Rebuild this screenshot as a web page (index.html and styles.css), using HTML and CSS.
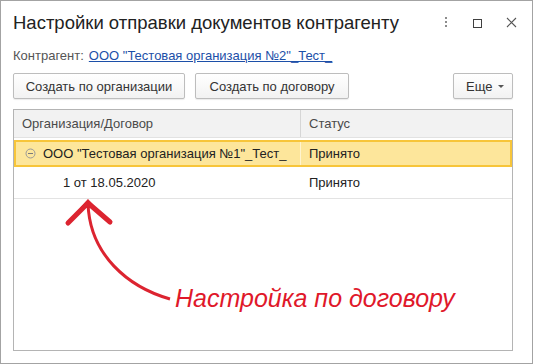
FILE: index.html
```
<html>
    <head>
        <title>Настройки отправки документов контрагенту</title>
        <meta charset="utf-8">
        <link rel="stylesheet" href="styles.css">
    </head>
    <body>
    <div class="window">
        <!-- title bar -->
        <div class="title-bar">
            <h1 class="title">Настройки отправки документов контрагенту</h1>
            <div class="title-icons">
                <svg class="icon-more" width="4" height="12" viewBox="0 0 4 12">
                    <rect x="1" y="0" width="2" height="2" fill="#8c8c8c"/>
                    <rect x="1" y="4" width="2" height="2" fill="#8c8c8c"/>
                    <rect x="1" y="8" width="2" height="2" fill="#8c8c8c"/>
                </svg>
                <svg class="icon-max" width="10" height="10" viewBox="0 0 10 10">
                    <rect x="1.5" y="1.5" width="8" height="8" fill="none" stroke="#404040" stroke-width="1"/>
                </svg>
                <svg class="icon-close" width="11" height="11" viewBox="0 0 11 11">
                    <path d="M1 1 L10 10 M10 1 L1 10" stroke="#555" stroke-width="1.1"/>
                </svg>
            </div>
        </div>

        <div class="counterparty">
            <span class="label">Контрагент:</span>
            <a class="link" href="#">ООО "Тестовая организация №2"_Тест_</a>
        </div>

        <div class="toolbar">
            <button class="btn btn-org">Создать по организации</button>
            <button class="btn btn-contract">Создать по договору</button>
            <button class="btn btn-more">Еще <span class="caret"></span></button>
        </div>

        <!-- list -->
        <div class="grid">
            <div class="grid-head">
                <div class="col-name">Организация/Договор</div>
                <div class="col-status">Статус</div>
            </div>
            <div class="grid-row row-selected">
                <div class="col-name">
                    <svg class="tree-toggle" width="11" height="11" viewBox="0 0 11 11">
                        <circle cx="5.5" cy="5.5" r="4.5" fill="none" stroke="#9a9a9a" stroke-width="1"/>
                        <path d="M3 5.5 H8" stroke="#7a7a7a" stroke-width="1"/>
                    </svg>
                    ООО "Тестовая организация №1"_Тест_
                </div>
                <div class="col-status">Принято</div>
            </div>
            <div class="grid-row row-child">
                <div class="col-name">1 от 18.05.2020</div>
                <div class="col-status">Принято</div>
            </div>
        </div>

        <!-- annotation over the list -->
        <div class="note">
            <svg class="note-arrow" width="534" height="364" viewBox="0 0 534 364">
                <path d="M170 299 C 128 287, 90 255, 88 204" fill="none" stroke="#dc2430" stroke-width="3"/>
                <path d="M68 223 L88 203 L110 222" fill="none" stroke="#dc2430" stroke-width="5" stroke-linecap="round" stroke-linejoin="miter"/>
                <path d="M80 208 L88 199 L96 208 Z" fill="#dc2430"/>
            </svg>
            <div class="note-text">Настройка по договору</div>
        </div>
    </div>
    </body>
</html>
```

FILE: styles.css
```
body{
    margin: 0;
    background-color: #fff;
    font-family: "Liberation Sans", Arial, sans-serif;
    color: #333;
}

.window{
    position: relative;
    box-sizing: border-box;
    width: 533px;
    height: 364px;
    border: 1px solid #a3a3a3;
    padding: 0 19px 0 12px;
    background-color: #fff;
}

.title-bar{
    display: flex;
    align-items: center;
    height: 43px;
}

.title{
    margin: 0;
    font-size: 18.5px;
    font-weight: normal;
    color: #222;
    flex: 1;
}

.title-icons{
    display: flex;
    align-items: center;
    gap: 24px;
    margin-right: -4px;
}

.counterparty{
    display: flex;
    align-items: center;
    height: 22px;
    font-size: 13px;
}

.label{
    color: #555;
    margin-right: 5px;
}

.link{
    color: #1c4fa8;
    text-decoration: underline;
}

.toolbar{
    display: flex;
    gap: 10px;
    margin-top: 7px;
}

.btn{
    height: 26px;
    padding: 0;
    white-space: nowrap;
    font-family: "Liberation Sans", Arial, sans-serif;
    font-size: 13px;
    color: #333;
    background: linear-gradient(#ffffff, #f2f2f2);
    border: 1px solid #bdbdbd;
    border-radius: 2px;
    box-shadow: 0 1px 1px rgba(0,0,0,0.08);
}

.btn-org{
    width: 172px;
}

.btn-contract{
    width: 154px;
}

.btn-more{
    width: 60px;
    margin-left: auto;
    padding: 0 8px 0 12px;
    display: flex;
    align-items: center;
    justify-content: space-between;
}

.caret{
    width: 0;
    height: 0;
    border-left: 3px solid transparent;
    border-right: 3px solid transparent;
    border-top: 3px solid #555;
}

.grid{
    box-sizing: border-box;
    margin-top: 10px;
    width: 500px;
    height: 242px;
    border: 1px solid #b4b4b4;
    font-size: 13px;
}

.grid-head{
    display: flex;
    height: 27px;
    background-color: #f2f2f2;
    border-bottom: 1px solid #e2e2e2;
    color: #4a4a4a;
}

.grid-head .col-name{
    border-right: 1px solid #d6d6d6;
}

.grid-row{
    display: flex;
}

.col-name{
    box-sizing: border-box;
    width: 287px;
    padding-left: 8px;
    display: flex;
    align-items: center;
    white-space: nowrap;
}

.col-status{
    flex: 1;
    padding-left: 8px;
    display: flex;
    align-items: center;
}

.row-selected{
    box-sizing: border-box;
    height: 27px;
    margin-top: 2px;
    background-color: #fde69b;
    border: 2px solid #f7c53a;
    color: #222;
}

.row-selected .col-name{
    width: 285px;
    padding-left: 9px;
    border-right: 1px solid #fff4cf;
}

.tree-toggle{
    margin-right: 7px;
}

.row-child{
    height: 31px;
    border-bottom: 1px solid #e3e3e3;
    color: #222;
}

.row-child .col-name{
    padding-left: 49px;
}

.note{
    position: absolute;
    left: -1px;
    top: -1px;
    width: 534px;
    height: 364px;
    pointer-events: none;
}

.note-arrow{
    position: absolute;
    left: 0;
    top: 0;
}

.note-text{
    position: absolute;
    left: 175px;
    top: 284px;
    font-size: 25px;
    font-style: italic;
    color: #e0182a;
    white-space: nowrap;
}
```
